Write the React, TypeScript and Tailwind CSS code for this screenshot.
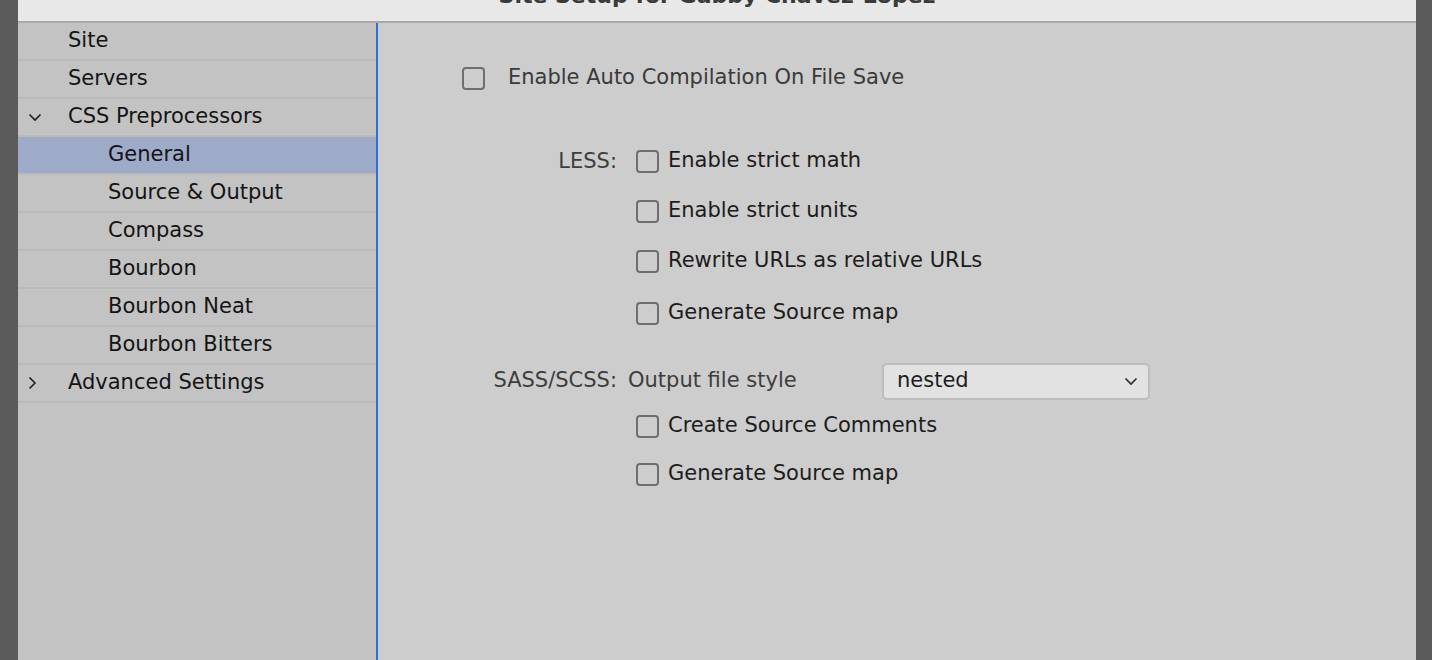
import React from "react";

const font = { fontFamily: '"DejaVu Sans", "Lucida Grande", sans-serif' };

function Box() {
  return <div className="w-[23px] h-[23px] rounded-[4px] border-2 border-[#6e6e6e] shrink-0" />;
}

function Check({ label }: { label: string }) {
  return (
    <div className="flex items-center gap-[9px] h-[24px]">
      <Box />
      <span className="text-[#1c1c1c]">{label}</span>
    </div>
  );
}

const items: { label: string; level: number; chevron?: "down" | "right"; selected?: boolean }[] = [
  { label: "Site", level: 0 },
  { label: "Servers", level: 0 },
  { label: "CSS Preprocessors", level: 0, chevron: "down" },
  { label: "General", level: 1, selected: true },
  { label: "Source & Output", level: 1 },
  { label: "Compass", level: 1 },
  { label: "Bourbon", level: 1 },
  { label: "Bourbon Neat", level: 1 },
  { label: "Bourbon Bitters", level: 1 },
  { label: "Advanced Settings", level: 0, chevron: "right" },
];

export default function App() {
  return (
    <div className="w-[1432px] h-[660px] bg-[#5b5b5b] flex overflow-hidden text-[21px]" style={font}>
      <div className="w-[18px] shrink-0" />
      <div className="w-[1398px] flex flex-col bg-[#cdcdcd]">
        <div className="h-[23px] bg-[#e8e8e8] border-b-2 border-[#a9a9a9] overflow-hidden flex justify-center shrink-0">
          <div className="mt-[-16px] font-bold text-[22px] text-[#3a3a3a] leading-[24px] whitespace-nowrap">Site Setup for Gabby Chavez-Lopez</div>
        </div>
        <div className="flex flex-1">
          <div className="w-[360px] bg-[#c3c3c3] border-r-2 border-[#2b6fd8] shrink-0">
            {items.map((it) => (
              <div
                key={it.label}
                className={
                  "h-[38px] flex items-center border-b-2 border-[#bababa] relative " +
                  (it.selected ? "bg-[#9eabc8]" : "")
                }
              >
                {it.chevron === "down" && (
                  <svg className="absolute left-[10px] top-[14px]" width="14" height="9" viewBox="0 0 14 9">
                    <path d="M1.5 1.5 L7 7 L12.5 1.5" fill="none" stroke="#1f1f1f" strokeWidth="1.6" />
                  </svg>
                )}
                {it.chevron === "right" && (
                  <svg className="absolute left-[10px] top-[11px]" width="9" height="14" viewBox="0 0 9 14">
                    <path d="M1.5 1.5 L7 7 L1.5 12.5" fill="none" stroke="#1f1f1f" strokeWidth="1.6" />
                  </svg>
                )}
                <span className={"text-[#141414] " + (it.level === 0 ? "pl-[50px]" : "pl-[90px]")}>{it.label}</span>
              </div>
            ))}
          </div>
          <div className="flex-1 flex flex-col">
            <div className="flex items-center gap-[23px] pl-[84px] mt-[43px] h-[24px]">
              <Box />
              <span className="text-[#3a3a3a]">Enable Auto Compilation On File Save</span>
            </div>
            <div className="flex mt-[59px]">
              <div className="w-[239px] text-right text-[#3d3d3d] leading-[24px]">LESS:</div>
              <div className="flex flex-col gap-[26px] pl-[19px]">
                <Check label="Enable strict math" />
                <Check label="Enable strict units" />
                <Check label="Rewrite URLs as relative URLs" />
                <div className="mt-[2px]">
                  <Check label="Generate Source map" />
                </div>
              </div>
            </div>
            <div className="flex items-center mt-[38px] h-[36px]">
              <div className="w-[239px] text-right text-[#3d3d3d] whitespace-nowrap">SASS/SCSS:</div>
              <div className="pl-[11px] w-[265px] text-[#3d3d3d] whitespace-nowrap">Output file style</div>
              <div className="w-[268px] h-[37px] rounded-[5px] bg-[#e2e2e2] border-2 border-[#bdbdbd] flex items-center justify-between pl-[13px] pr-[10px]">
                <span className="text-[#1c1c1c]">nested</span>
                <svg width="14" height="9" viewBox="0 0 14 9">
                  <path d="M1.5 1.5 L7 7 L12.5 1.5" fill="none" stroke="#2a2a2a" strokeWidth="1.6" />
                </svg>
              </div>
            </div>
            <div className="flex flex-col gap-[24px] pl-[258px] mt-[15px]">
              <Check label="Create Source Comments" />
              <Check label="Generate Source map" />
            </div>
          </div>
        </div>
      </div>
      <div className="flex-1 bg-[#5b5b5b]" />
    </div>
  );
}
